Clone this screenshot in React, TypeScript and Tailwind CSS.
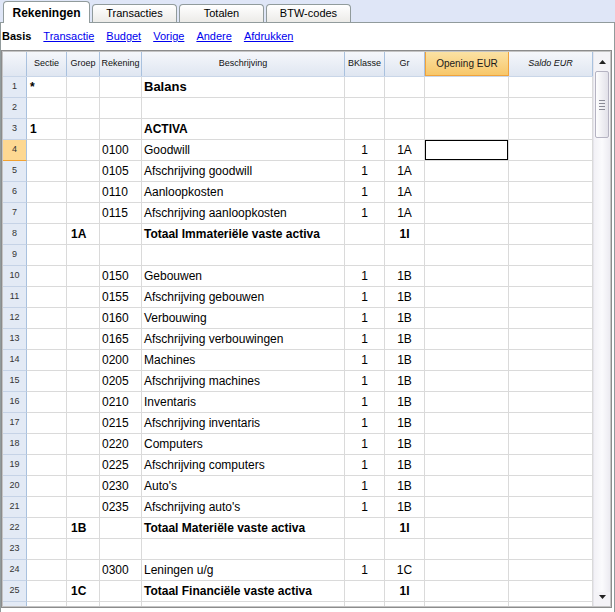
import React from "react";

type Row = {
  s?: string;
  g?: string;
  r?: string;
  b?: string;
  k?: string;
  gr?: string;
  bold?: boolean;
  big?: boolean;
  sel?: boolean;
};

const rows: Row[] = [
  { s: "*", b: "Balans", bold: true, big: true },
  {},
  { s: "1", b: "ACTIVA", bold: true },
  { r: "0100", b: "Goodwill", k: "1", gr: "1A", sel: true },
  { r: "0105", b: "Afschrijving goodwill", k: "1", gr: "1A" },
  { r: "0110", b: "Aanloopkosten", k: "1", gr: "1A" },
  { r: "0115", b: "Afschrijving aanloopkosten", k: "1", gr: "1A" },
  { g: "1A", b: "Totaal Immateriële vaste activa", gr: "1I", bold: true },
  {},
  { r: "0150", b: "Gebouwen", k: "1", gr: "1B" },
  { r: "0155", b: "Afschrijving gebouwen", k: "1", gr: "1B" },
  { r: "0160", b: "Verbouwing", k: "1", gr: "1B" },
  { r: "0165", b: "Afschrijving verbouwingen", k: "1", gr: "1B" },
  { r: "0200", b: "Machines", k: "1", gr: "1B" },
  { r: "0205", b: "Afschrijving machines", k: "1", gr: "1B" },
  { r: "0210", b: "Inventaris", k: "1", gr: "1B" },
  { r: "0215", b: "Afschrijving inventaris", k: "1", gr: "1B" },
  { r: "0220", b: "Computers", k: "1", gr: "1B" },
  { r: "0225", b: "Afschrijving computers", k: "1", gr: "1B" },
  { r: "0230", b: "Auto's", k: "1", gr: "1B" },
  { r: "0235", b: "Afschrijving auto's", k: "1", gr: "1B" },
  { g: "1B", b: "Totaal Materiële vaste activa", gr: "1I", bold: true },
  {},
  { r: "0300", b: "Leningen u/g", k: "1", gr: "1C" },
  { g: "1C", b: "Totaal Financiële vaste activa", gr: "1I", bold: true },
  {},
];

const cell = "h-full border-r border-[#dadada] flex items-center text-[12px] text-[#000000] overflow-hidden whitespace-nowrap";

function Tab({ label, active }: { label: string; active?: boolean }) {
  if (active) {
    return (
      <div className="-mb-px h-[22px] w-[87px] bg-white border border-b-0 border-[#919b9c] rounded-t-[4px] flex items-center justify-center text-[12px] font-bold text-black">
        {label}
      </div>
    );
  }
  return (
    <div className="h-[18px] w-[85px] bg-gradient-to-b from-white to-[#ecebe8] border border-b-0 border-[#919b9c] rounded-t-[4px] flex items-center justify-center text-[11px] text-black">
      {label}
    </div>
  );
}

function HeaderRow() {
  const h = "h-full border-r border-[#a9c1de] flex items-center justify-center text-[9px] text-[#111111]";
  return (
    <div className="flex h-[25px] bg-gradient-to-b from-[#f5f7fb] to-[#dfe6f1] border-b border-[#c9d6e8]">
      <div className={`${h} w-[24px]`} />
      <div className={`${h} w-[40px]`}>Sectie</div>
      <div className={`${h} w-[33px]`}>Groep</div>
      <div className={`${h} w-[42px]`}>Rekening</div>
      <div className={`${h} w-[203px]`}>Beschrijving</div>
      <div className={`${h} w-[40px]`}>BKlasse</div>
      <div className={`${h} w-[40px]`}>Gr</div>
      <div className="h-full w-[84px] border border-t-0 border-[#f0a33c] bg-gradient-to-b from-[#fbe2a3] to-[#f7c76a] flex items-center justify-center text-[10px] text-[#1a1a1a]">
        Opening EUR
      </div>
      <div className={`${h} w-[84px] italic text-[#333]`}>Saldo EUR</div>
    </div>
  );
}

function DataRow({ row, n, last }: { row: Row; n: number; last?: boolean }) {
  const b = row.bold ? "font-bold" : "";
  return (
    <div className="flex h-[21px]">
      <div
        className={`h-full w-[24px] border-r border-[#a9c1de] flex items-center justify-center text-[9px] text-[#333] ${
          row.sel ? "bg-[#fdd892] border-b border-b-[#f2a231]" : "bg-[#e3eaf5] border-b border-b-[#c6d3e6]"
        }`}
      >
        {last ? "" : n}
      </div>
      <div className="flex flex-1 h-full border-b border-[#dadada]">
        <div className={`${cell} w-[40px] pl-[3px] ${b}`}>{row.s}</div>
        <div className={`${cell} w-[33px] pl-[4px] ${b}`}>{row.g}</div>
        <div className={`${cell} w-[42px] pl-[2px]`}>{row.r}</div>
        <div className={`${cell} w-[203px] pl-[2px] ${b} ${row.big ? "text-[13px]" : ""}`}>{row.b}</div>
        <div className={`${cell} w-[40px] justify-center`}>{row.k}</div>
        <div className={`${cell} w-[40px] justify-center ${b}`}>{row.gr}</div>
        <div className={`${cell} w-[84px]`}>
          {row.sel && <div className="w-full h-full border border-black" />}
        </div>
        <div className={`${cell} w-[84px]`} />
      </div>
    </div>
  );
}

function Scrollbar() {
  return (
    <div className="w-[17px] h-full bg-[#f4f3f7] border-l border-[#e6e5ec] flex flex-col">
      <div className="h-[19px] flex items-center justify-center">
        <svg width="7" height="4" viewBox="0 0 7 4">
          <path d="M3.5 0 L7 4 L0 4 Z" fill="#222" />
        </svg>
      </div>
      <div className="h-[67px] mx-[1px] rounded-[2px] border border-[#b5b3c2] bg-gradient-to-r from-[#fefefe] to-[#e2e1e9] flex flex-col items-center justify-center gap-[2px]">
        <div className="w-[6px] h-px bg-[#8a8a96]" />
        <div className="w-[6px] h-px bg-[#8a8a96]" />
        <div className="w-[6px] h-px bg-[#8a8a96]" />
        <div className="w-[6px] h-px bg-[#8a8a96]" />
      </div>
      <div className="flex-1 bg-gradient-to-r from-[#f2f1f6] via-[#fbfbfd] to-[#ecebf1]" />
      <div className="h-[14px] flex items-start justify-center pt-[3px]">
        <svg width="7" height="4" viewBox="0 0 7 4">
          <path d="M0 0 L7 0 L3.5 4 Z" fill="#222" />
        </svg>
      </div>
    </div>
  );
}

export default function App() {
  return (
    <div className="w-[615px] h-[612px] overflow-hidden bg-white font-['Liberation_Sans',Arial,sans-serif]">
      <div className="h-[23px] bg-[#dfe6f7] border-b border-[#919b9c] flex items-end pl-[3px] gap-[2px]">
        <Tab label="Rekeningen" active />
        <Tab label="Transacties" />
        <Tab label="Totalen" />
        <Tab label="BTW-codes" />
      </div>
      <div className="h-[589px] border-l border-r border-[#919b9c] bg-white">
        <div className="h-[27px] flex items-center gap-[12px] pl-[1px] text-[11px]">
          <span className="font-bold text-black">Basis</span>
          <span className="text-[#0000ee] underline">Transactie</span>
          <span className="text-[#0000ee] underline">Budget</span>
          <span className="text-[#0000ee] underline">Vorige</span>
          <span className="text-[#0000ee] underline">Andere</span>
          <span className="text-[#0000ee] underline">Afdrukken</span>
        </div>
        <div className="w-[611px] h-[558px] border border-[#8c8c8c]">
          <div className="w-full h-full border border-[#c4c4c4] flex overflow-hidden">
            <div className="w-[590px] h-full overflow-hidden">
              <HeaderRow />
              {rows.map((r, i) => (
                <DataRow key={i} row={r} n={i + 1} last={i === rows.length - 1} />
              ))}
            </div>
            <Scrollbar />
          </div>
        </div>
      </div>
    </div>
  );
}
